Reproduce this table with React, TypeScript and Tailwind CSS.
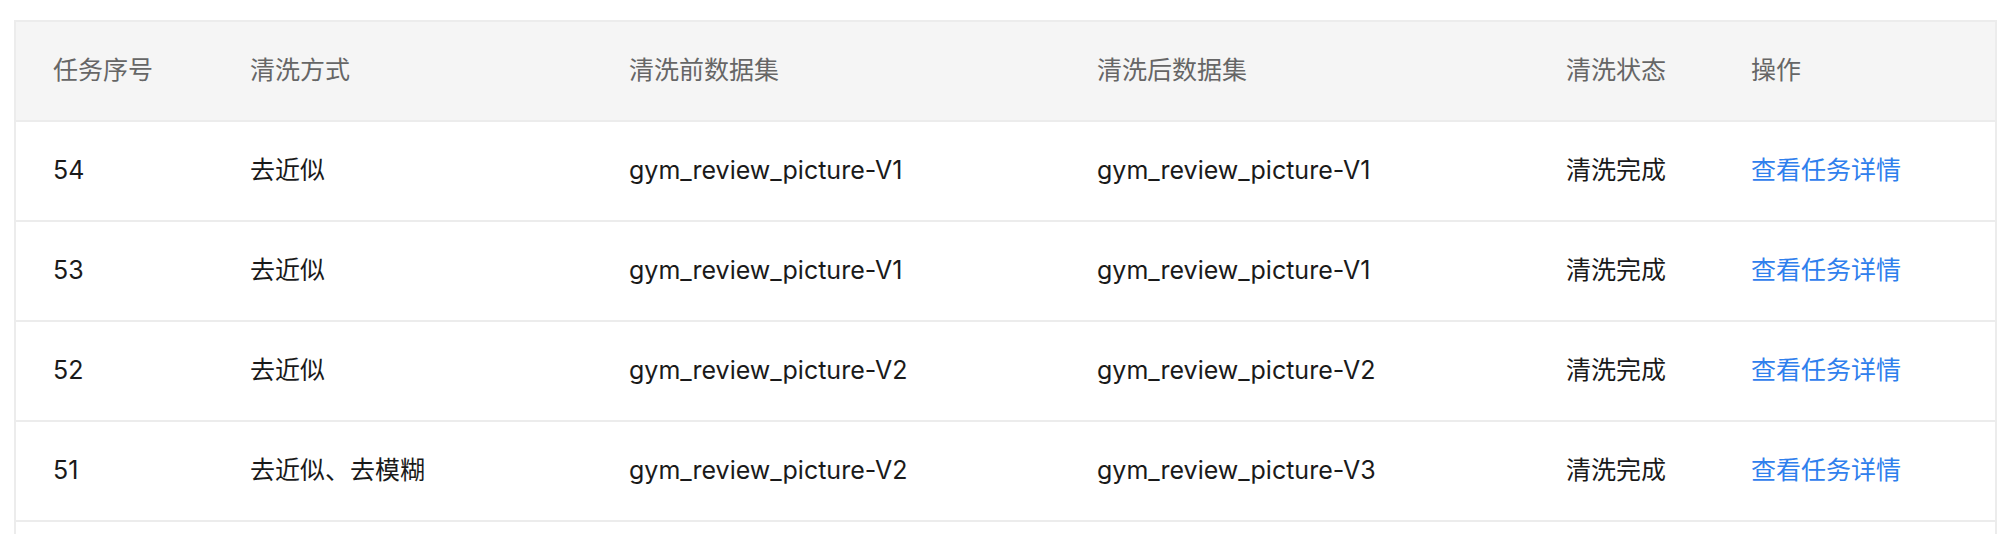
const rows = [
  { id: '54', mode: '去近似', before: 'gym_review_picture-V1', after: 'gym_review_picture-V1', status: '清洗完成' },
  { id: '53', mode: '去近似', before: 'gym_review_picture-V1', after: 'gym_review_picture-V1', status: '清洗完成' },
  { id: '52', mode: '去近似', before: 'gym_review_picture-V2', after: 'gym_review_picture-V2', status: '清洗完成' },
  { id: '51', mode: '去近似、去模糊', before: 'gym_review_picture-V2', after: 'gym_review_picture-V3', status: '清洗完成' },
]

const cols = 'grid grid-cols-[197px_379px_468px_469px_185px_1fr] pl-[37px] items-center'

export default function App() {
  return (
    <div
      className="min-h-screen bg-white pt-[20px] pl-[14px] pr-[13px]"
      style={{ fontFamily: 'Inter, "Noto Sans CJK SC", sans-serif' }}
    >
      <div className="border-2 border-b-0 border-[#ececec] text-[25px]">
        {/* 表头 */}
        <div className={`${cols} h-[98px] bg-[#f5f5f5] text-[#666666]`}>
          <div>任务序号</div>
          <div>清洗方式</div>
          <div>清洗前数据集</div>
          <div>清洗后数据集</div>
          <div>清洗状态</div>
          <div>操作</div>
        </div>

        {rows.map((r) => (
          <div key={r.id} className={`${cols} h-[100px] border-t-2 border-[#ececec] text-[#1a1a1a]`}>
            <div>{r.id}</div>
            <div>{r.mode}</div>
            <div>{r.before}</div>
            <div>{r.after}</div>
            <div>{r.status}</div>
            <div>
              <a className="text-[#2f80ed] cursor-pointer">查看任务详情</a>
            </div>
          </div>
        ))}

        {/* 下一行（超出可视区域） */}
        <div className="h-[60px] border-t-2 border-[#ececec]" />
      </div>
    </div>
  )
}
